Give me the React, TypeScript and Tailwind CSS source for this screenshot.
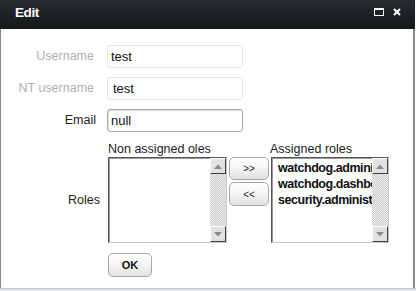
import React from "react";

function ScrollBtn({ down }: { down?: boolean }) {
  return (
    <div className="w-[16px] h-[16px] bg-[#e2e2e2] border border-t-white border-l-white border-b-[#404040] border-r-[#404040] flex items-center justify-center">
      <svg width="8" height="5" viewBox="0 0 8 5">
        {down ? (
          <polygon points="0,0 8,0 4,4.5" fill="#8a8a8a" />
        ) : (
          <polygon points="0,5 8,5 4,0.5" fill="#8a8a8a" />
        )}
      </svg>
    </div>
  );
}

function ListBox({ items, width }: { items: string[]; width: string }) {
  return (
    <div
      className={`${width} h-[86px] border border-t-[#555] border-l-[#555] border-b-[#c8c8c8] border-r-[#c8c8c8] bg-white flex`}
    >
      <div className="flex-1 overflow-hidden pl-[5px] pt-[1px] border-t border-l border-t-[#9a9a9a] border-l-[#9a9a9a]">
        {items.map((it) => (
          <div
            key={it}
            className="whitespace-nowrap text-[12.5px] tracking-[-0.45px] leading-[16px] font-bold text-[#111]"
          >
            {it}
          </div>
        ))}
      </div>
      <div className="w-[16px] flex flex-col [background:repeating-conic-gradient(#c9c9c9_0%_25%,#f2f2f2_0%_50%)_0_0/2px_2px]">
        <ScrollBtn />
        <div className="flex-1" />
        <ScrollBtn down />
      </div>
    </div>
  );
}

function SmallBtn({ children, className }: { children: React.ReactNode; className?: string }) {
  return (
    <div
      className={`flex items-center justify-center rounded-[5px] border border-[#a8a8a8] bg-[linear-gradient(#ffffff,#f4f4f4_50%,#e2e2e2)] shadow-[inset_0_1px_0_#fff] ${className ?? ""}`}
    >
      {children}
    </div>
  );
}

export default function App() {
  const input =
    "h-[23px] w-[136px] rounded-[3px] bg-white flex items-center pl-[3px] text-[13px] text-[#111]";
  return (
    <div className="w-[416px] h-[291px] bg-white flex flex-col font-['Liberation_Sans',Arial,sans-serif] overflow-hidden">
      <div className="h-[29px] shrink-0 flex items-center justify-between bg-[linear-gradient(#282b2f,#1d2022_55%,#17191b)] pl-[15px] pr-[14px] mr-[1px]">
        <span className="text-white font-bold text-[13.5px] tracking-[-0.4px] leading-none mt-[-4px]">
          Edit
        </span>
        <div className="flex items-center gap-[9px] mt-[-5px]">
          <div className="w-[10px] h-[8px] border border-white border-t-2" />
          <svg width="8" height="8" viewBox="0 0 8 8">
            <path d="M1 1 L7 7 M7 1 L1 7" stroke="#fff" strokeWidth="2" />
          </svg>
        </div>
      </div>
      <div className="flex-1 flex flex-col border-l border-l-[#8a8a8a] border-r-2 border-r-[#8c8c8c] mr-[1px]">
        <div className="grid grid-cols-[99px_1fr] gap-x-[7px] pt-[16px] items-center">
          <div className="text-right pr-[6px] text-[12.5px] text-[#b0b0b0]">Username</div>
          <div className={`${input} border border-[#e4e4e4]`}>test</div>

          <div className="h-[9px] col-span-2" />
          <div className="text-right pr-[6px] text-[12.5px] text-[#b0b0b0]">NT username</div>
          <div className={`${input} border border-[#e4e4e4] pl-[5px]`}>test</div>

          <div className="h-[9px] col-span-2" />
          <div className="text-right pr-[4px] text-[12.5px] text-[#222]">Email</div>
          <div className={`${input} border border-[#a9a9a9] shadow-[inset_1px_1px_1px_#ddd]`}>null</div>

          <div className="h-[10px] col-span-2" />
          <div />
          <div className="flex h-[15px] items-end text-[12.5px] text-[#222] leading-[15px]">
            <div className="w-[121px] pl-[1px]">Non assigned oles</div>
            <div className="w-[42px]" />
            <div>Assigned roles</div>
          </div>

          <div className="text-right text-[12.5px] text-[#222] pr-0">Roles</div>
          <div className="flex items-start">
            <div className="ml-[1px]">
              <ListBox items={[]} width="w-[119px]" />
            </div>
            <div className="ml-[2px] flex flex-col gap-[2px]">
              <SmallBtn className="w-[40px] h-[23px] text-[10px] text-[#222]">&gt;&gt;</SmallBtn>
              <SmallBtn className="w-[40px] h-[24px] text-[10px] text-[#222]">&lt;&lt;</SmallBtn>
            </div>
            <div className="ml-[2px]">
              <ListBox
                items={["watchdog.administrator", "watchdog.dashboard", "security.administrator"]}
                width="w-[118px]"
              />
            </div>
          </div>

          <div className="h-[10px] col-span-2" />
          <div />
          <div className="ml-[1px]">
            <SmallBtn className="w-[44px] h-[24px] text-[11px] font-bold text-[#111]">OK</SmallBtn>
          </div>
        </div>
        <div className="flex-1" />
      </div>
      <div className="h-[3px] shrink-0 bg-[#dde0e5] border-t border-t-[#c4c8cd]" />
    </div>
  );
}
